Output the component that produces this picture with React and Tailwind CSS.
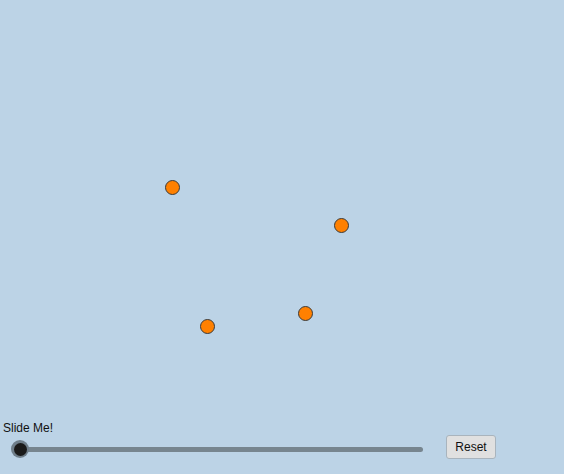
import React, { useState } from 'react';

const initialDots = [
    { id: 1, x: 172, y: 187 },
    { id: 2, x: 341, y: 225.5 },
    { id: 3, x: 207, y: 326.5 },
    { id: 4, x: 305, y: 313 },
];

const App = () => {
    const [value, setValue] = useState(0);

    return (
        <div className="w-[564px] h-[474px] bg-[#bcd3e6] flex flex-col overflow-hidden" style={{ fontFamily: '"Liberation Sans", Arial, sans-serif' }}>
            {/* Canvas */}
            <div className="relative h-[421px] shrink-0">
                {initialDots.map(dot => (
                    <div
                        key={dot.id}
                        className="absolute w-[15px] h-[15px] rounded-full bg-[#ff8000] border border-[#3a3a3a]"
                        style={{ left: dot.x - 7.5, top: dot.y - 7.5 }}
                    />
                ))}
            </div>

            {/* Controls */}
            <div className="pl-[3px] h-[14px] text-[12px] leading-[14px] text-[#111]">Slide Me!</div>
            <div className="flex items-start pl-[11px]">
                <div className="relative w-[412px] h-[18px] mt-[5px]">
                    <div className="absolute left-[9px] right-0 top-[6.5px] h-[5px] rounded-full bg-[#77858f]" />
                    <div
                        className="absolute top-0 w-[18px] h-[18px] rounded-full bg-[#6f7e8a] flex items-center justify-center"
                        style={{ left: value }}
                        onClick={() => setValue(0)}
                    >
                        <div className="w-[13px] h-[13px] rounded-full bg-[#1a1a1a]" />
                    </div>
                </div>
                <button
                    onClick={() => setValue(0)}
                    className="ml-[23px] w-[50px] h-[24px] rounded-[3px] border border-[#a9b4bd] bg-[#e0e0e0] text-[12px] text-[#111] flex items-center justify-center"
                >
                    Reset
                </button>
            </div>
        </div>
    );
};

export default App;
